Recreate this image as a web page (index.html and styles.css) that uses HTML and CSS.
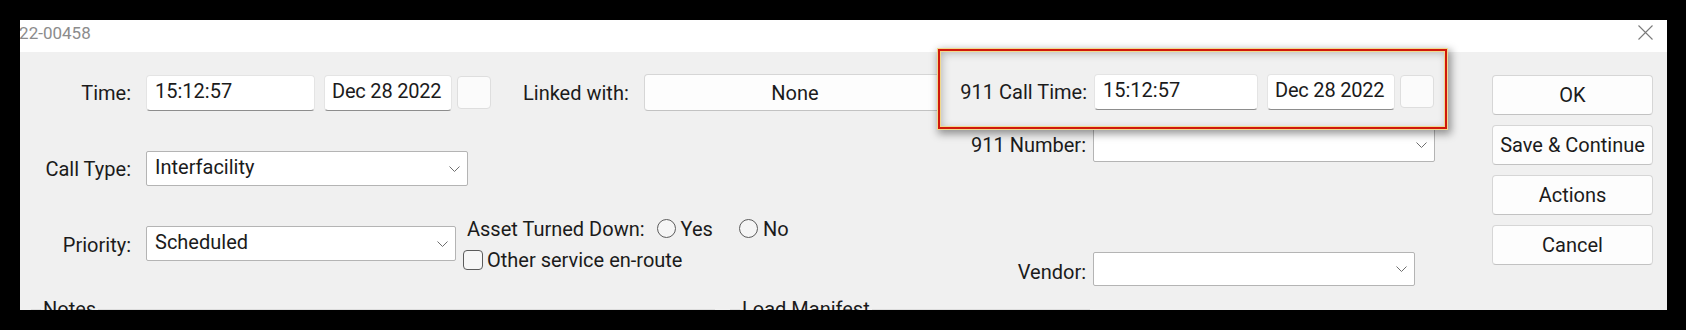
FILE: index.html
```html
<!DOCTYPE html>
<html>
<head>
<meta charset="utf-8">
<link rel="stylesheet" href="styles.css">
</head>
<body>
<div class="window">
  <div class="titlebar">
    <span class="title">2022-00458</span>
    <svg class="close" width="15" height="15" viewBox="0 0 15 15"><path d="M0.5 0.5 L14.5 14.5 M14.5 0.5 L0.5 14.5" stroke="#7a7a7a" stroke-width="1.1" fill="none"/></svg>
  </div>
  <div class="content">
    <div class="left">
      <div class="row r1">
        <span class="lbl">Time:</span>
        <div class="tb w-time">15:12:57</div>
        <div class="tb w-date">Dec 28 2022</div>
        <div class="sq"></div>
        <span class="lbl-linked">Linked with:</span>
        <div class="btn none">None</div>
      </div>
      <div class="row r2">
        <span class="lbl">Call Type:</span>
        <div class="combo w-calltype"><span>Interfacility</span><svg width="11" height="6" viewBox="0 0 11 6"><path d="M0.5 0.5 L5.5 5.5 L10.5 0.5" fill="none" stroke="#6e6e6e"/></svg></div>
      </div>
      <div class="row r3">
        <span class="lbl">Priority:</span>
        <div class="combo w-priority"><span>Scheduled</span><svg width="11" height="6" viewBox="0 0 11 6"><path d="M0.5 0.5 L5.5 5.5 L10.5 0.5" fill="none" stroke="#6e6e6e"/></svg></div>
        <div class="asset">
          <div class="line line1">
            <span>Asset Turned Down:</span>
            <span class="radio r-yes"></span><span>Yes</span>
            <span class="radio r-no"></span><span>No</span>
          </div>
          <div class="line line2">
            <span class="check"></span><span>Other service en-route</span>
          </div>
        </div>
      </div>
      <div class="groups">
        <fieldset class="grp notes"><legend>Notes</legend></fieldset>
        <fieldset class="grp manifest"><legend>Load Manifest</legend></fieldset>
      </div>
    </div>
    <div class="right">
      <div class="highlight">
        <span class="hl-lbl">911 Call Time:</span>
        <div class="tb w-time2">15:12:57</div>
        <div class="tb w-date">Dec 28 2022</div>
        <div class="sq"></div>
      </div>
      <div class="row rnum">
        <span class="rlbl">911 Number:</span>
        <div class="combo w-num"><span></span><svg width="11" height="6" viewBox="0 0 11 6"><path d="M0.5 0.5 L5.5 5.5 L10.5 0.5" fill="none" stroke="#6e6e6e"/></svg></div>
      </div>
      <div class="row rvendor">
        <span class="rlbl">Vendor:</span>
        <div class="combo w-vendor"><span></span><svg width="11" height="6" viewBox="0 0 11 6"><path d="M0.5 0.5 L5.5 5.5 L10.5 0.5" fill="none" stroke="#6e6e6e"/></svg></div>
      </div>
    </div>
    <div class="buttons">
      <div class="btn action">OK</div>
      <div class="btn action">Save &amp; Continue</div>
      <div class="btn action">Actions</div>
      <div class="btn action">Cancel</div>
    </div>
  </div>
</div>
</body>
</html>
```
FILE: styles.css
```css
html, body {
  margin: 0;
  padding: 0;
  background: #000;
}
body {
  font-family: Roboto, "Noto Sans", sans-serif;
  font-size: 20px;
  color: #1b1b1b;
  padding: 20px 0 0 20px;
  height: 330px;
  box-sizing: border-box;
  overflow: hidden;
}
.window {
  width: 1647px;
  height: 290px;
  background: #f0f0f0;
  overflow: hidden;
}
.titlebar {
  height: 32px;
  background: #fff;
  display: flex;
  justify-content: space-between;
  align-items: flex-start;
}
.title {
  margin-left: -20px;
  padding-top: 3px;
  font-size: 17px;
  line-height: 20px;
  color: #8c8c8c;
}
.close {
  margin-top: 5px;
  margin-right: 14px;
}
.content {
  display: flex;
  height: 258px;
}
.left {
  width: 917px;
  flex-shrink: 0;
  display: flex;
  flex-direction: column;
}
.row {
  display: flex;
  align-items: center;
}
.row > * {
  flex-shrink: 0;
}
.lbl {
  width: 111px;
  text-align: right;
  margin-right: 15px;
}
.tb {
  box-sizing: border-box;
  height: 36px;
  background: #fff;
  border: 1px solid #e4e4e4;
  border-bottom-color: #8d8d8d;
  border-radius: 4px;
  padding: 0 6px 3px 8px;
  display: flex;
  align-items: center;
  white-space: nowrap;
  overflow: hidden;
}
.w-time { width: 169px; margin-right: 9px; }
.w-time2 { width: 164px; margin-right: 9px; }
.w-date { width: 128px; margin-right: 5px; padding-left: 7px; letter-spacing: -0.2px; }
.sq {
  box-sizing: border-box;
  width: 34px;
  height: 33px;
  background: #fbfbfb;
  border: 1px solid #dedede;
  border-radius: 4px;
}
.r1 {
  margin-top: 22px;
}
.lbl-linked {
  width: 107px;
  margin-left: 32px;
  margin-right: 14px;
  white-space: nowrap;
}
.btn {
  box-sizing: border-box;
  background: #fdfdfd;
  border: 1px solid #d6d6d6;
  border-bottom-color: #c2c2c2;
  border-radius: 4px;
  display: flex;
  align-items: center;
  justify-content: center;
}
.none {
  width: 302px;
  height: 37px;
}
.combo {
  box-sizing: border-box;
  height: 35px;
  background: #fff;
  border: 1px solid #b4b4b4;
  border-radius: 2px;
  padding: 0 7px 0 8px;
  display: flex;
  align-items: center;
  justify-content: space-between;
}
.combo span {
  margin-bottom: 3px;
}
.r2 {
  margin-top: 40px;
}
.w-calltype { width: 322px; }
.r3 {
  margin-top: 27px;
  align-items: flex-start;
}
.r3 > .lbl {
  margin-top: 15px;
  line-height: 35px;
}
.r3 > .combo {
  margin-top: 13px;
}
.w-priority { width: 310px; margin-right: 7px; }
.asset {
  display: flex;
  flex-direction: column;
}
.line {
  display: flex;
  align-items: center;
  height: 31px;
}
.line1 {
  padding-left: 4px;
}
.radio {
  box-sizing: border-box;
  width: 19px;
  height: 19px;
  border-radius: 50%;
  border: 1px solid #5c5c5c;
  background: #f5f5f5;
  margin-right: 5px;
}
.r-yes { margin-left: 12px; }
.r-no { margin-left: 26px; }
.check {
  box-sizing: border-box;
  width: 20px;
  height: 20px;
  border-radius: 4px;
  border: 1px solid #5c5c5c;
  background: #f7f7f7;
  margin-right: 4px;
}
.groups {
  display: flex;
  margin-top: 22px;
}
.grp {
  margin: 0;
  padding: 0 9px;
  border: 1px solid #dcdcdc;
  height: 100px;
  box-sizing: border-box;
  flex-shrink: 0;
}
.grp legend {
  padding: 0 2px;
  line-height: 24px;
}
.notes {
  margin-left: 11px;
  width: 684px;
}
.manifest {
  margin-left: 15px;
  width: 360px;
}
.right {
  width: 513px;
  flex-shrink: 0;
  display: flex;
  flex-direction: column;
}
.highlight {
  position: relative;
  z-index: 1;
  box-sizing: border-box;
  margin-top: -3px;
  margin-left: 1px;
  width: 509px;
  height: 80px;
  background: #f0f0f0;
  border: 2px solid #d0180a;
  box-shadow: 0 0 0 1px #f1d98e, 2px 3px 8px 2px rgba(0, 0, 0, 0.4), inset 0 0 0 1px #f1d98e, inset 2px 2px 8px rgba(0, 0, 0, 0.25);
  display: flex;
  align-items: center;
  padding-top: 5px;
}
.hl-lbl {
  width: 147px;
  text-align: right;
  margin-right: 7px;
  white-space: nowrap;
}
.rnum {
  margin-top: -2px;
}
.rlbl {
  width: 149px;
  text-align: right;
  margin-right: 7px;
}
.rvendor .rlbl {
  margin-top: 6px;
}
.w-num { width: 342px; }
.rvendor {
  margin-top: 90px;
}
.w-vendor { width: 322px; height: 34px; }
.buttons {
  margin-left: 42px;
  width: 161px;
  padding-top: 23px;
  display: flex;
  flex-direction: column;
  gap: 10px;
}
.action {
  height: 40px;
}
```
